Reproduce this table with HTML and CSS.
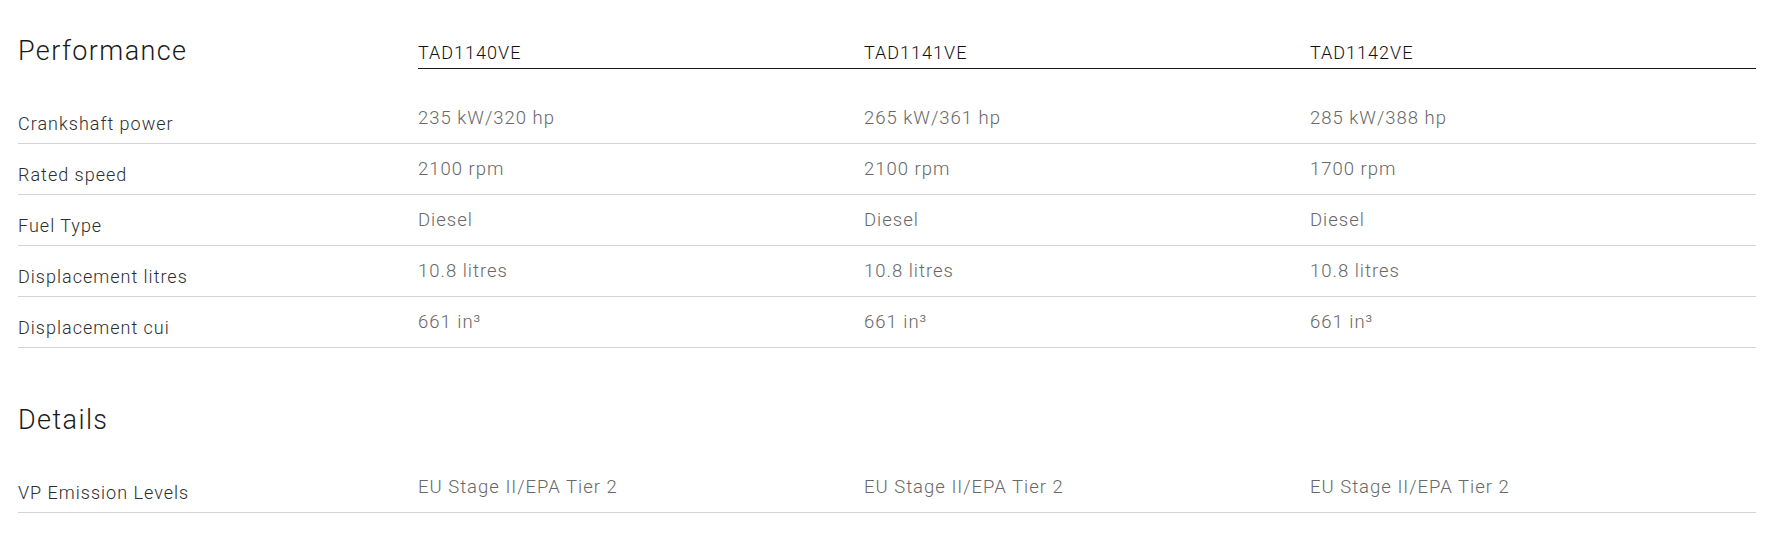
FILE: index.html
```html
<!DOCTYPE html>
<html lang="en">
<head>
<meta charset="utf-8">
<title>Specifications</title>
<link rel="stylesheet" href="styles.css">
</head>
<body>
<main class="specs">
  <section class="spec-section">
    <div class="spec-head">
      <h2 class="spec-title">Performance</h2>
      <div class="model">TAD1140VE</div>
      <div class="model">TAD1141VE</div>
      <div class="model">TAD1142VE</div>
    </div>
    <div class="spec-row">
      <div class="label">Crankshaft power</div>
      <div class="value">235 kW/320 hp</div>
      <div class="value">265 kW/361 hp</div>
      <div class="value">285 kW/388 hp</div>
    </div>
    <div class="spec-row">
      <div class="label">Rated speed</div>
      <div class="value">2100 rpm</div>
      <div class="value">2100 rpm</div>
      <div class="value">1700 rpm</div>
    </div>
    <div class="spec-row">
      <div class="label">Fuel Type</div>
      <div class="value">Diesel</div>
      <div class="value">Diesel</div>
      <div class="value">Diesel</div>
    </div>
    <div class="spec-row">
      <div class="label">Displacement litres</div>
      <div class="value">10.8 litres</div>
      <div class="value">10.8 litres</div>
      <div class="value">10.8 litres</div>
    </div>
    <div class="spec-row">
      <div class="label">Displacement cui</div>
      <div class="value">661 in³</div>
      <div class="value">661 in³</div>
      <div class="value">661 in³</div>
    </div>
  </section>

  <section class="spec-section">
    <div class="spec-head">
      <h2 class="spec-title">Details</h2>
    </div>
    <div class="spec-row">
      <div class="label">VP Emission Levels</div>
      <div class="value">EU Stage II/EPA Tier 2</div>
      <div class="value">EU Stage II/EPA Tier 2</div>
      <div class="value">EU Stage II/EPA Tier 2</div>
    </div>
  </section>
</main>
</body>
</html>
```

FILE: styles.css
```css
html, body {
  margin: 0;
  padding: 0;
  background: #ffffff;
}

body {
  font-family: Roboto, "Liberation Sans", Arial, sans-serif;
  -webkit-font-smoothing: antialiased;
}

.specs {
  padding: 35px 21px 0 18px;
}

.spec-section + .spec-section {
  margin-top: 56px;
}

.spec-head {
  display: grid;
  grid-template-columns: 400px repeat(3, 1fr);
  min-height: 34px;
  margin-bottom: 24px;
}

.spec-title {
  margin: 0;
  font-size: 27px;
  line-height: 32px;
  font-weight: 300;
  color: #1b1b1b;
  letter-spacing: 1.4px;
}

.model {
  box-sizing: border-box;
  height: 34px;
  padding: 6px 0 3px;
  font-size: 18px;
  line-height: 24px;
  font-weight: 300;
  color: #111111;
  border-bottom: 1px solid #1a1a1a;
  letter-spacing: 1px;
}

.spec-row {
  display: grid;
  grid-template-columns: 400px repeat(3, 1fr);
  box-sizing: border-box;
  height: 51px;
  border-bottom: 1px solid #d4d4d4;
}

.label {
  padding-top: 19px;
  font-size: 18px;
  line-height: 24px;
  font-weight: 300;
  color: #2e2e2e;
  letter-spacing: 1px;
}

.value {
  padding-top: 13px;
  font-size: 18.5px;
  line-height: 24px;
  font-weight: 300;
  color: #686868;
  letter-spacing: 1px;
}
```
